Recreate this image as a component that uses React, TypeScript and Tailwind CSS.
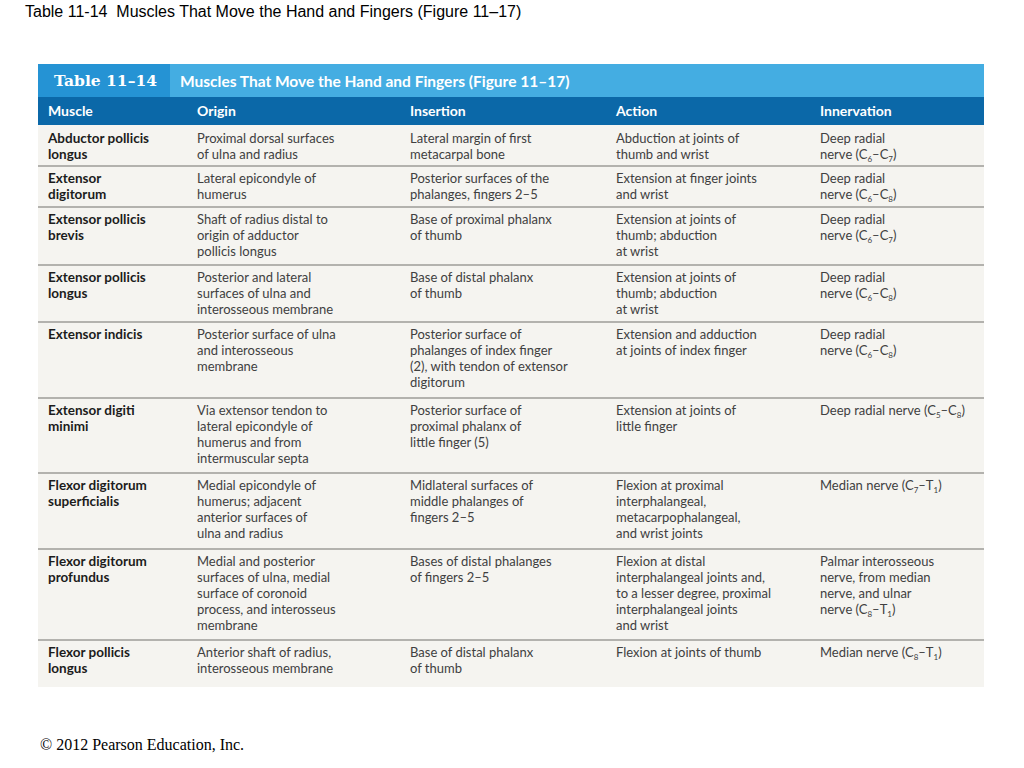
import React from "react";

type Row = {
  muscle: string[];
  origin: string[];
  insertion: string[];
  action: string[];
  nerve: React.ReactNode[];
  h: string;
};

const S = ({ children }: { children: React.ReactNode }) => (
  <span className="text-[8px] align-[-3px] leading-none">{children}</span>
);

const rows: Row[] = [
  {
    muscle: ["Abductor pollicis", "longus"],
    origin: ["Proximal dorsal surfaces", "of ulna and radius"],
    insertion: ["Lateral margin of first", "metacarpal bone"],
    action: ["Abduction at joints of", "thumb and wrist"],
    nerve: [
      "Deep radial",
      <>nerve (C<S>6</S>–C<S>7</S>)</>,
    ],
    h: "h-[42px] pt-[5px]",
  },
  {
    muscle: ["Extensor", "digitorum"],
    origin: ["Lateral epicondyle of", "humerus"],
    insertion: ["Posterior surfaces of the", "phalanges, fingers 2–5"],
    action: ["Extension at finger joints", "and wrist"],
    nerve: [
      "Deep radial",
      <>nerve (C<S>6</S>–C<S>8</S>)</>,
    ],
    h: "h-[41px]",
  },
  {
    muscle: ["Extensor pollicis", "brevis"],
    origin: ["Shaft of radius distal to", "origin of adductor", "pollicis longus"],
    insertion: ["Base of proximal phalanx", "of thumb"],
    action: ["Extension at joints of", "thumb; abduction", "at wrist"],
    nerve: [
      "Deep radial",
      <>nerve (C<S>6</S>–C<S>7</S>)</>,
    ],
    h: "h-[58px]",
  },
  {
    muscle: ["Extensor pollicis", "longus"],
    origin: ["Posterior and lateral", "surfaces of ulna and", "interosseous membrane"],
    insertion: ["Base of distal phalanx", "of thumb"],
    action: ["Extension at joints of", "thumb; abduction", "at wrist"],
    nerve: [
      "Deep radial",
      <>nerve (C<S>6</S>–C<S>8</S>)</>,
    ],
    h: "h-[57px]",
  },
  {
    muscle: ["Extensor indicis"],
    origin: ["Posterior surface of ulna", "and interosseous", "membrane"],
    insertion: [
      "Posterior surface of",
      "phalanges of index finger",
      "(2), with tendon of extensor",
      "digitorum",
    ],
    action: ["Extension and adduction", "at joints of index finger"],
    nerve: [
      "Deep radial",
      <>nerve (C<S>6</S>–C<S>8</S>)</>,
    ],
    h: "h-[76px]",
  },
  {
    muscle: ["Extensor digiti", "minimi"],
    origin: [
      "Via extensor tendon to",
      "lateral epicondyle of",
      "humerus and from",
      "intermuscular septa",
    ],
    insertion: ["Posterior surface of", "proximal phalanx of", "little finger (5)"],
    action: ["Extension at joints of", "little finger"],
    nerve: [<>Deep radial nerve (C<S>5</S>–C<S>8</S>)</>],
    h: "h-[75px]",
  },
  {
    muscle: ["Flexor digitorum", "superficialis"],
    origin: [
      "Medial epicondyle of",
      "humerus; adjacent",
      "anterior surfaces of",
      "ulna and radius",
    ],
    insertion: ["Midlateral surfaces of", "middle phalanges of", "fingers 2–5"],
    action: [
      "Flexion at proximal",
      "interphalangeal,",
      "metacarpophalangeal,",
      "and wrist joints",
    ],
    nerve: [<>Median nerve (C<S>7</S>–T<S>1</S>)</>],
    h: "h-[76px]",
  },
  {
    muscle: ["Flexor digitorum", "profundus"],
    origin: [
      "Medial and posterior",
      "surfaces of ulna, medial",
      "surface of coronoid",
      "process, and interosseus",
      "membrane",
    ],
    insertion: ["Bases of distal phalanges", "of fingers 2–5"],
    action: [
      "Flexion at distal",
      "interphalangeal joints and,",
      "to a lesser degree, proximal",
      "interphalangeal joints",
      "and wrist",
    ],
    nerve: [
      "Palmar interosseous",
      "nerve, from median",
      "nerve, and ulnar",
      <>nerve (C<S>8</S>–T<S>1</S>)</>,
    ],
    h: "h-[91px]",
  },
  {
    muscle: ["Flexor pollicis", "longus"],
    origin: ["Anterior shaft of radius,", "interosseous membrane"],
    insertion: ["Base of distal phalanx", "of thumb"],
    action: ["Flexion at joints of thumb"],
    nerve: [<>Median nerve (C<S>8</S>–T<S>1</S>)</>],
    h: "h-[46px]",
  },
];

const Cell = ({ lines, bold }: { lines: React.ReactNode[]; bold?: boolean }) => (
  <div className={bold ? "font-bold text-[13.5px] text-[#1c1c1c]" : "text-[#404040]"}>
    {lines.map((l, i) => (
      <div key={i} className="whitespace-nowrap">
        {l}
      </div>
    ))}
  </div>
);

const cols = "grid grid-cols-[149px_213px_206px_204px_1fr] pl-[10px]";

export default function App() {
  return (
    <div className="relative w-[1024px] h-[768px] bg-white overflow-hidden">
      <div className="pl-[25px] pt-[3px] text-[16px] leading-[18px] text-black whitespace-pre font-['Liberation_Sans',Arial,sans-serif]">
        {"Table 11-14  Muscles That Move the Hand and Fingers (Figure 11–17)"}
      </div>

      <div className="ml-[38px] mt-[43px] w-[946px] bg-[#f5f4f0] font-['Lato','Open_Sans',sans-serif] text-[13px] leading-[16px]">
        <div className="flex h-[33px] bg-[#44ade2] text-white">
          <div className="w-[132px] bg-[#2593d4] flex items-center pl-[16px] font-['DejaVu_Serif',serif] font-bold text-[15.5px]">
            Table 11–14
          </div>
          <div className="flex items-center pl-[10px] font-bold text-[15.5px]">
            Muscles That Move the Hand and Fingers (Figure 11–17)
          </div>
        </div>
        <div className={`${cols} h-[28px] items-center bg-[#0b68a8] text-white font-bold text-[14px]`}>
          <div>Muscle</div>
          <div>Origin</div>
          <div>Insertion</div>
          <div>Action</div>
          <div>Innervation</div>
        </div>
        {rows.map((r, i) => (
          <div
            key={i}
            className={`${cols} ${r.h} ${i === 0 ? "" : "pt-[3px]"} ${i < rows.length - 1 ? "border-b-2 border-[#b3b2ae]" : ""}`}
          >
            <Cell lines={r.muscle} bold />
            <Cell lines={r.origin} />
            <Cell lines={r.insertion} />
            <Cell lines={r.action} />
            <Cell lines={r.nerve} />
          </div>
        ))}
      </div>

      <div className="pl-[40px] pt-[49px] text-[16px] leading-[18px] text-black font-['Liberation_Serif','Times_New_Roman',serif]">
        © 2012 Pearson Education, Inc.
      </div>
    </div>
  );
}
